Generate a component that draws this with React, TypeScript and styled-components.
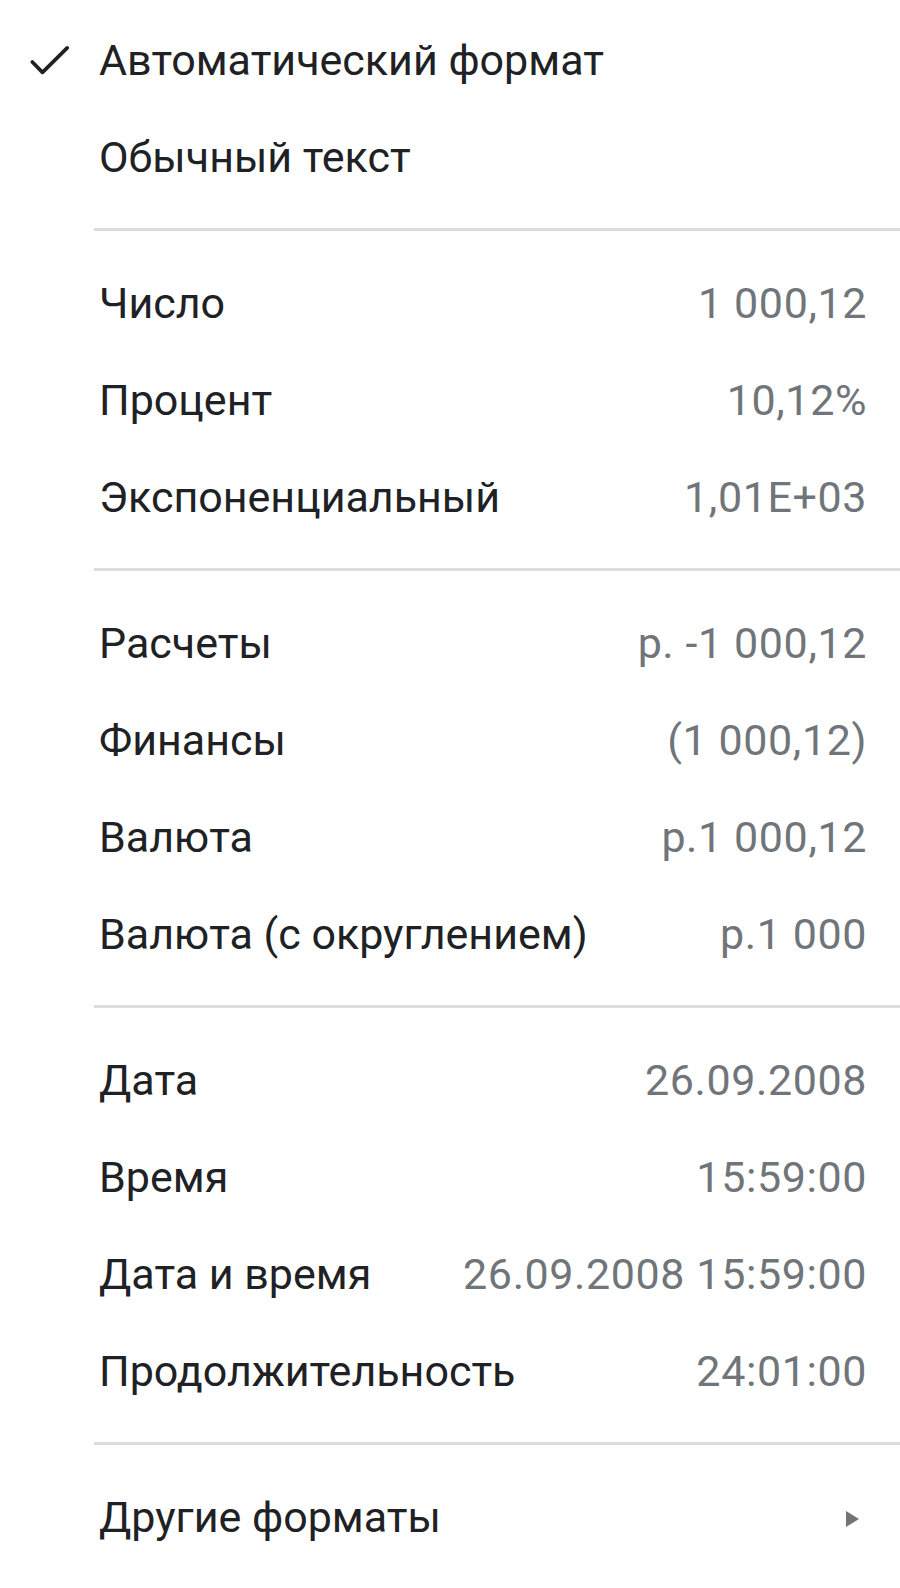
import React from 'react'
import styled, { createGlobalStyle } from 'styled-components'

const GlobalStyle = createGlobalStyle`
  html, body {
    margin: 0;
    padding: 0;
    background: #ffffff;
  }
  body {
    font-family: Roboto, "Liberation Sans", Arial, sans-serif;
  }
`

const Menu = styled.div`
  width: 900px;
  padding: 11px 0 12px 0;
  box-sizing: border-box;
  background: #ffffff;
`

const Item = styled.div`
  display: flex;
  align-items: center;
  height: 97px;
  padding: 0 33px 0 99px;
  position: relative;
`

const Check = styled.span`
  position: absolute;
  left: 23px;
  top: 50%;
  transform: translateY(-50%);
  width: 52px;
  height: 52px;
  display: flex;
  align-items: center;
  justify-content: center;
`

const Label = styled.span`
  flex: 1;
  font-size: 43px;
  color: #202124;
  white-space: nowrap;
`

const Value = styled.span`
  font-size: 43px;
  letter-spacing: 0.6px;
  color: #70757a;
  white-space: nowrap;
`

const Separator = styled.div`
  height: 49px;
  display: flex;
  align-items: center;
  padding-left: 94px;

  &::after {
    content: '';
    flex: 1;
    height: 3px;
    background: #dadce0;
  }
`

const Arrow = styled.span`
  width: 0;
  height: 0;
  border-top: 8px solid transparent;
  border-bottom: 8px solid transparent;
  border-left: 13px solid #70757a;
  margin-right: 8px;
  margin-top: 4px;
`

type Row = { label: string; value?: string }

const groups: Row[][] = [
  [{ label: 'Обычный текст' }],
  [
    { label: 'Число', value: '1 000,12' },
    { label: 'Процент', value: '10,12%' },
    { label: 'Экспоненциальный', value: '1,01E+03' }
  ],
  [
    { label: 'Расчеты', value: 'р. -1 000,12' },
    { label: 'Финансы', value: '(1 000,12)' },
    { label: 'Валюта', value: 'р.1 000,12' },
    { label: 'Валюта (с округлением)', value: 'р.1 000' }
  ],
  [
    { label: 'Дата', value: '26.09.2008' },
    { label: 'Время', value: '15:59:00' },
    { label: 'Дата и время', value: '26.09.2008 15:59:00' },
    { label: 'Продолжительность', value: '24:01:00' }
  ]
]

const App = () => {
  return (
    <>
      <GlobalStyle />
      <Menu>
        <Item>
          <Check>
            <svg width="52" height="52" viewBox="0 0 24 24">
              <path
                d="M4.3 12.9L9 17.7 20.4 6.4"
                fill="none"
                stroke="#202124"
                strokeWidth="1.7"
                strokeLinecap="round"
                strokeLinejoin="round"
              />
            </svg>
          </Check>
          <Label>Автоматический формат</Label>
        </Item>
        {groups.map((group, gi) => (
          <React.Fragment key={gi}>
            {gi > 0 && <Separator />}
            {group.map(row => (
              <Item key={row.label}>
                <Label>{row.label}</Label>
                {row.value && <Value>{row.value}</Value>}
              </Item>
            ))}
          </React.Fragment>
        ))}
        <Separator />
        <Item>
          <Label>Другие форматы</Label>
          <Arrow />
        </Item>
      </Menu>
    </>
  )
}

export default App
